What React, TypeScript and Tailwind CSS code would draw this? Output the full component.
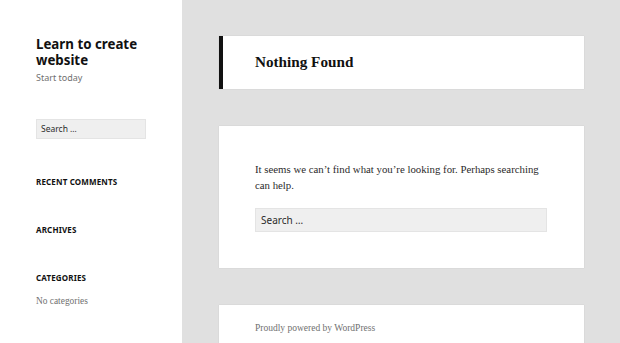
import React from 'react';

// --- Sidebar widget heading ---
const WidgetTitle: React.FC<{ label: string }> = ({ label }) => (
  <h2 className="font-['Noto_Sans',sans-serif] text-[8px] font-bold uppercase tracking-[0.02em] text-[#111] leading-[12px]">
    {label}
  </h2>
);

const SearchBox: React.FC<{ className: string; textClass: string }> = ({ className, textClass }) => (
  <div className={`bg-[#efefef] border border-[#e4e4e4] flex items-center shrink-0 ${className}`}>
    <span className={`font-['Noto_Sans',sans-serif] text-[#2b2b2b] ${textClass}`}>Search …</span>
  </div>
);

const App: React.FC = () => {
  return (
    <div className="w-[620px] h-[343px] overflow-hidden flex bg-[#e0e0e0]">
      {/* sidebar */}
      <aside className="w-[182px] shrink-0 bg-white pl-[36px] pr-[20px] pt-[36px]">
        <h1 className="font-['Noto_Sans',sans-serif] text-[13.3px] font-bold leading-[16px] text-[#111]">
          Learn to create website
        </h1>
        <p className="mt-[4px] font-['Noto_Sans',sans-serif] text-[9px] leading-[12px] text-[#707070]">Start today</p>
        <SearchBox className="mt-[35px] w-[110px] h-[20px] pl-[4px]" textClass="text-[8.5px]" />
        <div className="mt-[37px]">
          <WidgetTitle label="Recent Comments" />
        </div>
        <div className="mt-[36px]">
          <WidgetTitle label="Archives" />
        </div>
        <div className="mt-[36px]">
          <WidgetTitle label="Categories" />
          <p className="mt-[11px] font-['Liberation_Serif',serif] text-[9.4px] leading-[12px] text-[#707070]">No categories</p>
        </div>
      </aside>

      {/* main column */}
      <main className="flex-1 pl-[37px] pr-[36px] pt-[36px] flex flex-col">
        <header className="shrink-0 bg-white shadow-[0_0_1px_rgba(0,0,0,0.15)] border-l-4 border-[#111] h-[53px] pl-[32px] flex items-center">
          <h1 className="font-['Liberation_Serif',serif] text-[15.2px] font-bold text-[#111]">Nothing Found</h1>
        </header>

        <section className="shrink-0 mt-[37px] bg-white shadow-[0_0_1px_rgba(0,0,0,0.15)] h-[142px] pl-[36px] pr-[37px] pt-[35px]">
          <p className="font-['Liberation_Serif',serif] text-[10.8px] leading-[16px] text-[#2b2b2b]">
            It seems we can’t find what you’re looking for. Perhaps searching can help.
          </p>
          <SearchBox className="mt-[15px] w-[292px] h-[24px] pl-[5px]" textClass="text-[10px]" />
        </section>

        <footer className="shrink-0 mt-[37px] bg-white shadow-[0_0_1px_rgba(0,0,0,0.15)] h-[60px] pl-[36px] pt-[17px]">
          <p className="font-['Liberation_Serif',serif] text-[9.5px] leading-[12px] text-[#707070]">Proudly powered by WordPress</p>
        </footer>
      </main>
    </div>
  );
};

export default App;
